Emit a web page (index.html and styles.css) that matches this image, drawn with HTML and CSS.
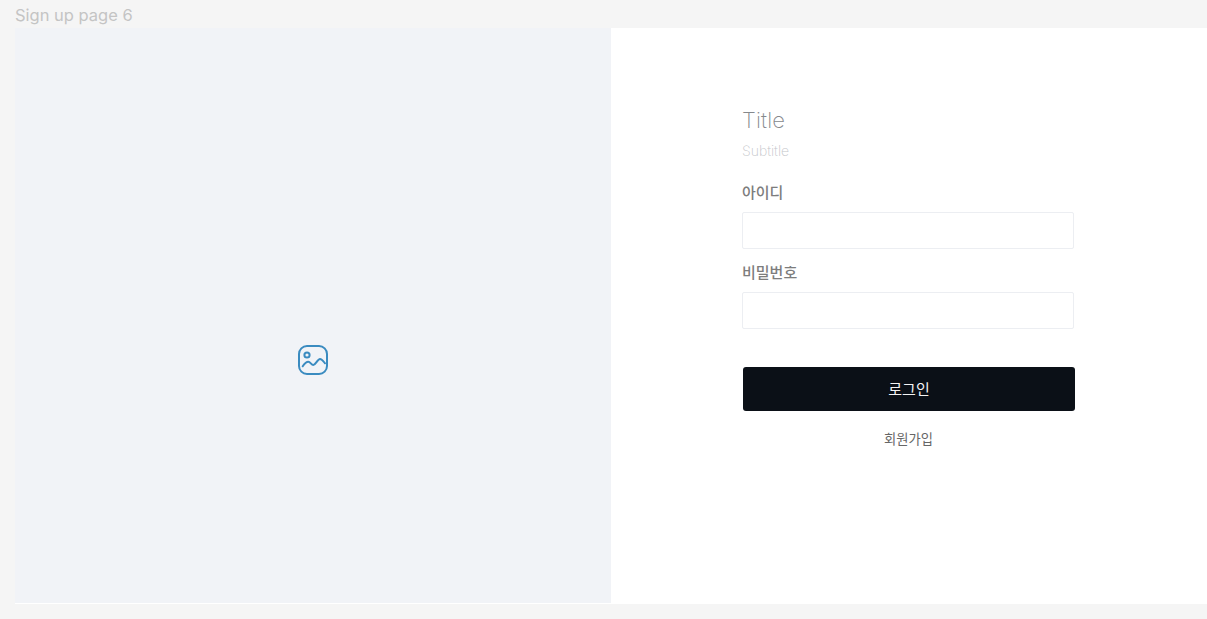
FILE: index.html
```html
<!DOCTYPE html>
<html lang="ko">
<head>
<meta charset="utf-8">
<title>Sign up page 6</title>
<link rel="stylesheet" href="styles.css">
</head>
<body>
<div class="page">
  <header class="page-title">Sign up page 6</header>
  <main class="frame">
    <section class="hero">
      <svg class="hero-icon" width="32" height="32" viewBox="0 0 32 32" fill="none" stroke="#3a8bc0" stroke-width="2" stroke-linecap="round" stroke-linejoin="round">
        <rect x="2" y="2" width="28" height="28" rx="8"/>
        <circle cx="10" cy="11" r="2.6"/>
        <path d="M5.700 22.300C7.500 19.600 9.400 17.700 11.300 17.700c2 0 3 3.300 5 3.300 2.300 0 4.200-6 6.700-6 1.900 0 3.400 2.300 5 4.300"/>
      </svg>
    </section>
    <section class="panel">
      <form class="form">
        <h1 class="title">Title</h1>
        <p class="subtitle">Subtitle</p>
        <label class="label label-first">아이디</label>
        <div class="input"></div>
        <label class="label label-next">비밀번호</label>
        <div class="input"></div>
        <div class="submit">로그인</div>
        <a class="signup">회원가입</a>
      </form>
    </section>
  </main>
</div>
</body>
</html>
```
FILE: styles.css
```css
* { box-sizing: border-box; }
html, body { margin: 0; height: 100%; }
body {
  background: #f5f5f5;
  font-family: Inter, "Noto Sans CJK KR", sans-serif;
  overflow: hidden;
}
.page { display: flex; flex-direction: column; height: 619px; padding-left: 15px; }
.page-title {
  height: 28px;
  padding-top: 5px;
  font-size: 16.5px;
  line-height: 21px;
  font-weight: 400;
  color: #c4c4c4;
}
.frame { display: flex; height: 576px; background: #fff; }
.hero {
  width: 596px;
  height: 575px;
  background: #f1f3f7;
  display: flex;
  align-items: center;
  justify-content: center;
}
.hero-icon { display: block; margin-top: 89px; margin-left: -1px; }
.panel { flex: 1; padding: 78px 0 0 131px; }
.form { width: 333px; display: flex; flex-direction: column; }
.title {
  margin: 0;
  font-size: 22px;
  line-height: 28px;
  font-weight: 200;
  color: #85888c;
  letter-spacing: 0.2px;
}
.subtitle {
  margin: 8px 0 0;
  font-size: 14px;
  line-height: 17px;
  font-weight: 200;
  color: #c4c6ca;
}
.label {
  font-size: 15px;
  line-height: 20px;
  color: #7d7d7d;
  font-weight: 500;
}
.label-first { margin-top: 24px; margin-bottom: 9px; }
.label-next { margin-top: 14px; margin-bottom: 9px; }
.input {
  width: 332px;
  height: 37px;
  background: #fff;
  border: 1px solid #eceef2;
  border-radius: 2px;
}
.submit {
  margin-top: 38px;
  margin-left: 1px;
  height: 44px;
  width: 332px;
  background: #0b1017;
  border-radius: 3px;
  color: #f4f4f4;
  font-size: 15px;
  line-height: 45px;
  text-align: center;
}
.signup {
  margin-top: 19px;
  font-size: 13.3px;
  line-height: 19px;
  color: #666;
  text-align: center;
}
```
